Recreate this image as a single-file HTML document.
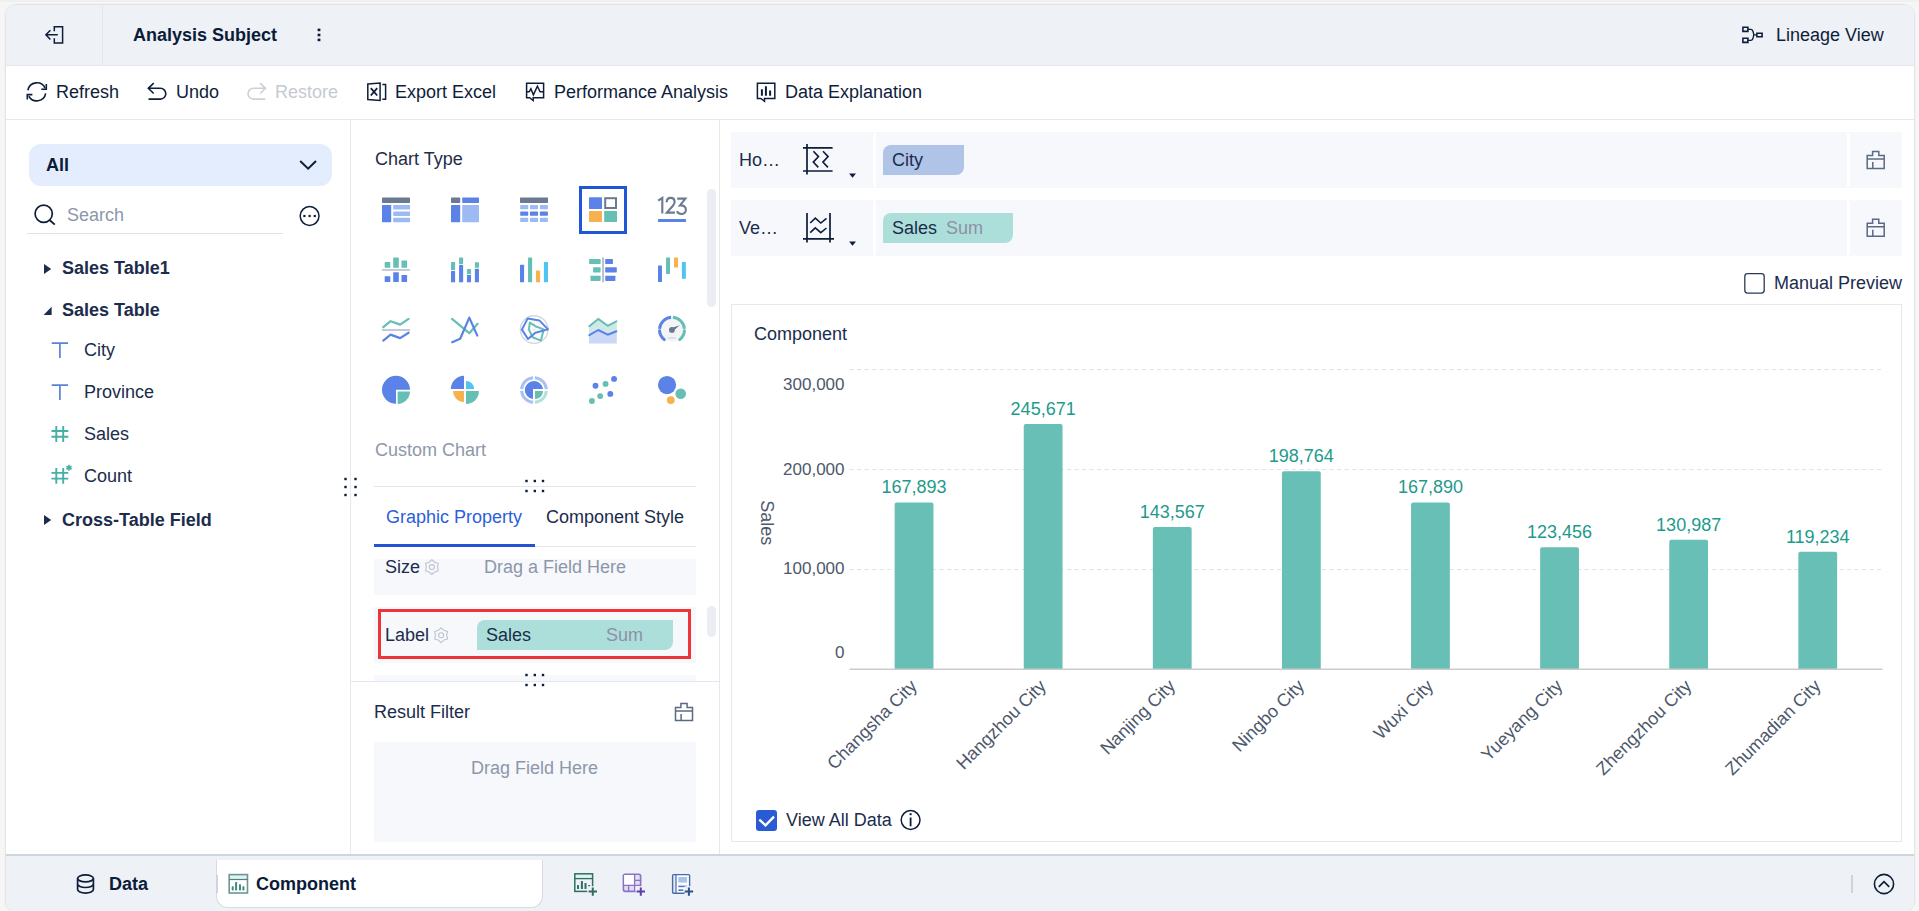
<!DOCTYPE html>
<html><head><meta charset="utf-8"><style>
*{box-sizing:border-box;margin:0;padding:0}
html,body{width:1919px;height:911px;overflow:hidden;background:#f6f6f6;font-family:"Liberation Sans",sans-serif;color:#0e1d3a}
.a{position:absolute}
.t{position:absolute;white-space:nowrap;font-size:18px;line-height:20px}
svg{position:absolute;left:0;top:0;overflow:visible}
</style></head><body>
<div class="a" style="left:0;top:0;width:1919px;height:2px;background:#f0f0f0"></div>
<div class="a" style="left:5px;top:4px;width:1910px;height:909px;border:1px solid #e4e4e4;border-radius:12px;overflow:hidden;background:#fff;box-shadow:0 0 0 1px #f2f2f2"><div class="a" style="left:0px;top:0px;width:1919px;height:61px;background:#eef1f6"></div><div class="a" style="left:0px;top:60px;width:1919px;height:1px;background:#e3e6ee"></div><div class="a" style="left:96px;top:0px;width:1px;height:60px;background:#e2e5ec"></div><div class="a" style="left:0px;top:114px;width:1919px;height:1px;background:#e6e8f0"></div><div class="a" style="left:344px;top:115px;width:1px;height:735px;background:#e6e8f0"></div><div class="a" style="left:713px;top:115px;width:1px;height:735px;background:#e6e8f0"></div><div class="a" style="left:0px;top:849px;width:1919px;height:60px;background:#eef1f6;border-top:2px solid #cfd5de"></div><div class="a" style="left:210px;top:855px;width:327px;height:48px;background:#fff;border-radius:0 0 12px 12px;border:1px solid #d6dbe3;border-top:none"></div><div class="a" style="left:210px;top:870px;width:2px;height:18px;background:#cfd5de"></div></div>
<div class="a" style="left:0;top:0;width:1919px;height:911px"><div class="t" style="left:133px;top:25px;font-weight:700;color:#0b1b38">Analysis Subject</div><div class="t" style="left:1776px;top:25px;color:#0e1d3a">Lineage View</div><div class="t" style="left:56px;top:82px;color:#0e1d3a">Refresh</div><div class="t" style="left:176px;top:82px;color:#0e1d3a">Undo</div><div class="t" style="left:275px;top:82px;color:#c5cad3">Restore</div><div class="t" style="left:395px;top:82px;color:#0e1d3a">Export Excel</div><div class="t" style="left:554px;top:82px;color:#0e1d3a">Performance Analysis</div><div class="t" style="left:785px;top:82px;color:#0e1d3a">Data Explanation</div><div class="a" style="left:29px;top:144px;width:303px;height:42px;background:#e3edfd;border-radius:12px"></div><div class="t" style="left:46px;top:155px;font-weight:700;color:#0b1b38">All</div><div class="t" style="left:67px;top:205px;color:#8c97aa">Search</div><div class="a" style="left:27px;top:233px;width:256px;height:1px;background:#dde1e8"></div><div class="t" style="left:62px;top:258px;font-weight:700;color:#1b2c4c">Sales Table1</div><div class="t" style="left:62px;top:300px;font-weight:700;color:#1b2c4c">Sales Table</div><div class="t" style="left:84px;top:340px;color:#1b2c4c">City</div><div class="t" style="left:84px;top:382px;color:#1b2c4c">Province</div><div class="t" style="left:84px;top:424px;color:#1b2c4c">Sales</div><div class="t" style="left:84px;top:466px;color:#1b2c4c">Count</div><div class="t" style="left:62px;top:510px;font-weight:700;color:#1b2c4c">Cross-Table Field</div><div class="t" style="left:375px;top:149px;color:#1f2d47">Chart Type</div><div class="a" style="left:707px;top:189px;width:9px;height:118px;background:#ebedf2;border-radius:5px"></div><div class="t" style="left:375px;top:440px;color:#8e98aa">Custom Chart</div><div class="a" style="left:374px;top:486px;width:322px;height:1px;background:#e3e6ee"></div><div class="t" style="left:386px;top:507px;color:#2b5fd9">Graphic Property</div><div class="t" style="left:546px;top:507px;color:#1b2c4c">Component Style</div><div class="a" style="left:374px;top:546px;width:322px;height:1px;background:#e6e8ef"></div><div class="a" style="left:374px;top:544px;width:161px;height:3px;background:#2352d6"></div><div class="a" style="left:374px;top:559px;width:322px;height:36px;background:#f7f8fc"></div><div class="t" style="left:385px;top:557px;color:#1b2c4c">Size</div><div class="t" style="left:484px;top:557px;color:#8c97aa">Drag a Field Here</div><div class="a" style="left:374px;top:607px;width:322px;height:56px;background:#f7f8fc"></div><div class="a" style="left:378px;top:609px;width:313px;height:50px;border:3px solid #ef3339"></div><div class="a" style="left:477px;top:620px;width:196px;height:30px;background:#addfda;border-radius:8px 0 8px 0"></div><div class="t" style="left:385px;top:625px;color:#1b2c4c">Label</div><div class="t" style="left:486px;top:625px;color:#1b2c4c">Sales</div><div class="t" style="left:606px;top:625px;color:#8d90a6">Sum</div><div class="a" style="left:707px;top:606px;width:9px;height:31px;background:#ebedf2;border-radius:5px"></div><div class="a" style="left:374px;top:675px;width:322px;height:6px;background:#f7f8fc"></div><div class="a" style="left:351px;top:681px;width:368px;height:1px;background:#e3e6ee"></div><div class="t" style="left:374px;top:702px;color:#1b2c4c">Result Filter</div><div class="a" style="left:374px;top:742px;width:322px;height:100px;background:#f7f8fc"></div><div class="t" style="left:471px;top:758px;color:#8c97aa">Drag Field Here</div><div class="a" style="left:731px;top:132px;width:1171px;height:56px;background:#f7f8fc"></div><div class="a" style="left:873px;top:133px;width:3px;height:54px;background:#fff"></div><div class="a" style="left:1847px;top:133px;width:3px;height:54px;background:#fff"></div><div class="t" style="left:739px;top:150px;color:#1b2c4c">Ho…</div><div class="a" style="left:731px;top:200px;width:1171px;height:56px;background:#f7f8fc"></div><div class="a" style="left:873px;top:201px;width:3px;height:54px;background:#fff"></div><div class="a" style="left:1847px;top:201px;width:3px;height:54px;background:#fff"></div><div class="t" style="left:739px;top:218px;color:#1b2c4c">Ve…</div><div class="a" style="left:883px;top:145px;width:81px;height:30px;background:#b0c4e8;border-radius:8px 0 8px 0"></div><div class="t" style="left:892px;top:150px;color:#1b2c4c">City</div><div class="a" style="left:883px;top:213px;width:130px;height:30px;background:#addfda;border-radius:8px 0 8px 0"></div><div class="t" style="left:892px;top:218px;color:#1b2c4c">Sales</div><div class="t" style="left:946px;top:218px;color:#8d90a6">Sum</div><div class="t" style="left:1774px;top:273px;color:#1b2c4c">Manual Preview</div><div class="a" style="left:731px;top:304px;width:1171px;height:538px;border:1px solid #e6e8f0"></div><div class="t" style="left:754px;top:324px;color:#1b2c4c">Component</div><div class="t" style="left:786px;top:810px;color:#1b2c4c">View All Data</div><div class="t" style="left:109px;top:874px;font-weight:700;color:#0b1b38">Data</div><div class="t" style="left:256px;top:874px;font-weight:700;color:#0b1b38">Component</div><div class="a" style="left:1851px;top:875px;width:2px;height:18px;background:#cdd2dc"></div></div>
<svg width="1919" height="911" viewBox="0 0 1919 911"><path d="M54.3 31.3 V26.7 H62.6 V43.1 H54.3 V38.3" stroke="#0e1d3a" stroke-width="1.5" fill="none" /><path d="M57.8 34.8 H46.3 M50.4 30.2 L45.9 34.8 L50.4 39.4" stroke="#0e1d3a" stroke-width="1.5" fill="none" /><rect x="317.6" y="28.599999999999998" width="2.8" height="2.6" fill="#0e1d3a" rx="0" /><rect x="317.6" y="33.7" width="2.8" height="2.6" fill="#0e1d3a" rx="0" /><rect x="317.6" y="38.6" width="2.8" height="2.6" fill="#0e1d3a" rx="0" /><path d="M1742.9 27.2 h5 v4.2 h-5 Z M1742.9 38.3 h5 v4.1 h-5 Z M1756.9 33.2 h5.2 v3.6 h-5.2 Z" stroke="#0e1d3a" stroke-width="1.6" fill="none" /><path d="M1747.9 29.4 H1750.8 Q1752.5 29.4 1753.2 32 L1753.8 34.8 H1756.9 M1747.9 40.4 H1750.8 Q1752.5 40.4 1753.2 37.6 L1753.8 34.8" stroke="#0e1d3a" stroke-width="1.3" fill="none" /><path d="M27.94 90.24 A9 9 0 0 1 45.08 88.28" stroke="#0e1d3a" stroke-width="1.6" fill="none" /><path d="M46.3 84.1 V89.2 H41.3" stroke="#0e1d3a" stroke-width="1.6" fill="none" /><path d="M45.66 93.36 A9 9 0 0 1 28.85 96.03" stroke="#0e1d3a" stroke-width="1.6" fill="none" /><path d="M27.3 99.5 V94.6 H32.4" stroke="#0e1d3a" stroke-width="1.6" fill="none" /><path d="M153.7 83.1 L148.3 88.3 L153.7 93.5 M148.5 88.3 H160.4 A5.4 5.4 0 0 1 160.4 99.1 H148.5" stroke="#0e1d3a" stroke-width="1.6" fill="none" /><path d="M260.1 83.1 L265.5 88.3 L260.1 93.5 M265.3 88.3 H253.4 A5.4 5.4 0 0 0 253.4 99.1 H265.3" stroke="#ccd0d8" stroke-width="1.6" fill="none" /><path d="M367.8 84 L380.1 83 V100.5 L367.8 99.5 Z" stroke="#0e1d3a" stroke-width="1.5" fill="none" /><path d="M370.8 88.2 L377.2 95.5 M377.2 88.2 L370.8 95.5" stroke="#0e1d3a" stroke-width="1.8" fill="none" /><path d="M382.3 84.6 H385.6 V99.2 H382.3" stroke="#0e1d3a" stroke-width="1.5" fill="none" /><path d="M526.6 83.3 H543.6 V97.7 H533.2 V100.5 L529.6 97.7 H526.6 Z" stroke="#0e1d3a" stroke-width="1.5" fill="none" /><path d="M526.6 91.8 H529.2 L530.9 88.8 L533.4 94.8 L537.4 86.2 L540.1 91.8 H543.6" stroke="#0e1d3a" stroke-width="1.5" fill="none" /><path d="M757.4 83.3 H774.8 V98.4 H764.5 V101.3 L760.8 98.4 H757.4 Z" stroke="#0e1d3a" stroke-width="1.5" fill="none" /><path d="M761.9 89.2 V95.8 M765.9 86.2 V95.8 M770.1 90.4 V95.8" stroke="#0e1d3a" stroke-width="2" fill="none" /><path d="M300.2 161 L308.1 168.6 L316 161" stroke="#0e1d3a" stroke-width="2" fill="none" /><circle cx="43.7" cy="213.8" r="8.6" fill="none" stroke="#0e1d3a" stroke-width="1.7" /><path d="M49.8 220.2 L54.8 224.6" stroke="#0e1d3a" stroke-width="1.8" fill="none" /><circle cx="309.6" cy="216" r="9.4" fill="none" stroke="#0e1d3a" stroke-width="1.5" /><rect x="303.29999999999995" y="214.9" width="2.2" height="2.2" fill="#0e1d3a" rx="0" /><rect x="308.5" y="214.9" width="2.2" height="2.2" fill="#0e1d3a" rx="0" /><rect x="313.7" y="214.9" width="2.2" height="2.2" fill="#0e1d3a" rx="0" /><path d="M44 264 L51.2 269 L44 274 Z" stroke="none" stroke-width="1.5" fill="#1b2c4c" /><path d="M51.6 306.8 V315 H43.6 Z" stroke="none" stroke-width="1.5" fill="#1b2c4c" /><path d="M44 515 L51.2 520 L44 525 Z" stroke="none" stroke-width="1.5" fill="#1b2c4c" /><path d="M51.7 343.2 H68.1 M59.9 343.2 V358.0" stroke="#5a82d9" stroke-width="1.7" fill="none" /><path d="M51.7 385.2 H68.1 M59.9 385.2 V400.0" stroke="#5a82d9" stroke-width="1.7" fill="none" /><path d="M56.3 426.1 V441.90000000000003 M63.2 426.1 V441.90000000000003 M51.5 431.0 H68.3 M51.5 436.70000000000005 H68.3" stroke="#45b0a4" stroke-width="1.9" fill="none" /><path d="M56.3 468 V483.8 M63.2 468 V483.8 M51.5 472.9 H68.3 M51.5 478.6 H68.3" stroke="#45b0a4" stroke-width="1.9" fill="none" /><path d="M69.00 470.80 L69.00 464.80" stroke="#45b0a4" stroke-width="1.6" fill="none" /><path d="M66.40 469.30 L71.60 466.30" stroke="#45b0a4" stroke-width="1.6" fill="none" /><path d="M66.40 466.30 L71.60 469.30" stroke="#45b0a4" stroke-width="1.6" fill="none" /><rect x="344.3" y="477.8" width="2.4" height="2.4" fill="#0e1d3a" rx="0" /><rect x="344.3" y="485.8" width="2.4" height="2.4" fill="#0e1d3a" rx="0" /><rect x="344.3" y="493.8" width="2.4" height="2.4" fill="#0e1d3a" rx="0" /><rect x="354.3" y="477.8" width="2.4" height="2.4" fill="#0e1d3a" rx="0" /><rect x="354.3" y="485.8" width="2.4" height="2.4" fill="#0e1d3a" rx="0" /><rect x="354.3" y="493.8" width="2.4" height="2.4" fill="#0e1d3a" rx="0" /><rect x="525.3" y="479.8" width="2.4" height="2.4" fill="#0e1d3a" rx="0" /><rect x="533.5999999999999" y="479.8" width="2.4" height="2.4" fill="#0e1d3a" rx="0" /><rect x="541.8" y="479.8" width="2.4" height="2.4" fill="#0e1d3a" rx="0" /><rect x="525.3" y="489.8" width="2.4" height="2.4" fill="#0e1d3a" rx="0" /><rect x="533.5999999999999" y="489.8" width="2.4" height="2.4" fill="#0e1d3a" rx="0" /><rect x="541.8" y="489.8" width="2.4" height="2.4" fill="#0e1d3a" rx="0" /><rect x="525.3" y="673.8" width="2.4" height="2.4" fill="#0e1d3a" rx="0" /><rect x="533.5999999999999" y="673.8" width="2.4" height="2.4" fill="#0e1d3a" rx="0" /><rect x="541.8" y="673.8" width="2.4" height="2.4" fill="#0e1d3a" rx="0" /><rect x="525.3" y="683.8" width="2.4" height="2.4" fill="#0e1d3a" rx="0" /><rect x="533.5999999999999" y="683.8" width="2.4" height="2.4" fill="#0e1d3a" rx="0" /><rect x="541.8" y="683.8" width="2.4" height="2.4" fill="#0e1d3a" rx="0" /><rect x="382" y="197.5" width="28" height="5.4" fill="#6b7a90" rx="0.6" /><rect x="382" y="205" width="9.2" height="17.2" fill="#5b82e6" rx="0.6" /><rect x="393.2" y="205" width="16.8" height="4.5" fill="#9dbbf2" rx="0.6" /><rect x="393.2" y="211.4" width="16.8" height="4.5" fill="#9dbbf2" rx="0.6" /><rect x="393.2" y="217.7" width="16.8" height="4.5" fill="#9dbbf2" rx="0.6" /><rect x="451" y="197.5" width="9.2" height="5.4" fill="#6b7a90" rx="0.6" /><rect x="462.2" y="197.5" width="16.8" height="5.4" fill="#5b82e6" rx="0.6" /><rect x="451" y="205" width="9.2" height="17.2" fill="#5b82e6" rx="0.6" /><rect x="462.2" y="205" width="16.8" height="17.2" fill="#9dbbf2" rx="0.6" /><rect x="520" y="197.5" width="28" height="5.4" fill="#6b7a90" rx="0.6" /><rect x="520.2" y="205" width="8" height="4.3" fill="#9dbbf2" rx="0.6" /><rect x="530" y="205" width="8" height="4.3" fill="#9dbbf2" rx="0.6" /><rect x="539.9" y="205" width="8" height="4.3" fill="#9dbbf2" rx="0.6" /><rect x="520.2" y="211.5" width="8" height="4.3" fill="#5b82e6" rx="0.6" /><rect x="530" y="211.5" width="8" height="4.3" fill="#5b82e6" rx="0.6" /><rect x="539.9" y="211.5" width="8" height="4.3" fill="#5b82e6" rx="0.6" /><rect x="520.2" y="217.8" width="8" height="4.3" fill="#9dbbf2" rx="0.6" /><rect x="530" y="217.8" width="8" height="4.3" fill="#9dbbf2" rx="0.6" /><rect x="539.9" y="217.8" width="8" height="4.3" fill="#9dbbf2" rx="0.6" /><rect x="580.5" y="187.5" width="45" height="45" fill="none" stroke="#2156d9" stroke-width="3"/><rect x="589" y="197.2" width="13" height="11.8" fill="#5b82e6" rx="0.5" /><rect x="605.2" y="198.2" width="10.8" height="9.8" fill="none" stroke="#6b7a90" stroke-width="2"/><rect x="589" y="210.9" width="13" height="11.2" fill="#f7b14f" rx="0.5" /><rect x="604.2" y="210.9" width="12.8" height="11.2" fill="#66bfb4" rx="0.5" /><path d="M658.2 200.6 L662.3 197.9 V213.6" stroke="#6b7a90" stroke-width="2.1" fill="none" /><path d="M666.6 202.3 C666.8 199.3 668.5 197.9 670.6 197.9 C673 197.9 674.6 199.6 674.6 201.9 C674.6 203.6 673.8 204.8 672.5 206.3 L666.8 212.6 H674.9" stroke="#6b7a90" stroke-width="2.1" fill="none" /><path d="M677.2 198.6 H685.4 L680 205.4 C683.5 205 685.9 206.8 685.9 209.8 C685.9 212.4 683.8 214 681.4 214 C679.5 214 677.8 213 676.9 211.3" stroke="#6b7a90" stroke-width="2.1" fill="none" /><rect x="658" y="218.9" width="28" height="3.1" fill="#5b82e6" rx="0.6" /><rect x="384.7" y="262.1" width="5.6" height="5.699999999999989" fill="#66bfb4" rx="0.5" /><rect x="393.2" y="257.5" width="5.6" height="10.300000000000011" fill="#66bfb4" rx="0.5" /><rect x="401.5" y="260.5" width="5.6" height="7.300000000000011" fill="#66bfb4" rx="0.5" /><rect x="382" y="269" width="28" height="1.9" fill="#c3c9d5" rx="0" /><rect x="384.7" y="276.3" width="5.6" height="5.699999999999989" fill="#5b82e6" rx="0.5" /><rect x="393.2" y="272.2" width="5.6" height="9.800000000000011" fill="#5b82e6" rx="0.5" /><rect x="401.5" y="274.9" width="5.6" height="7.100000000000023" fill="#5b82e6" rx="0.5" /><rect x="451" y="261.9" width="4.1" height="8.100000000000023" fill="#66bfb4" rx="0.5" /><rect x="451" y="271" width="4.1" height="11.199999999999989" fill="#5b82e6" rx="0.5" /><rect x="459.05" y="257.5" width="4.1" height="6.800000000000011" fill="#66bfb4" rx="0.5" /><rect x="459.05" y="265" width="4.1" height="17.19999999999999" fill="#5b82e6" rx="0.5" /><rect x="466.96" y="269" width="4.1" height="5.300000000000011" fill="#66bfb4" rx="0.5" /><rect x="466.96" y="275.1" width="4.1" height="7.099999999999966" fill="#5b82e6" rx="0.5" /><rect x="474.87" y="262.3" width="4.1" height="5.5" fill="#66bfb4" rx="0.5" /><rect x="474.87" y="268.8" width="4.1" height="13.399999999999977" fill="#5b82e6" rx="0.5" /><rect x="520" y="264.8" width="4.1" height="17.399999999999977" fill="#5b82e6" rx="0.5" /><rect x="528.05" y="257.5" width="4.1" height="24.69999999999999" fill="#66bfb4" rx="0.5" /><rect x="536" y="270.6" width="4.1" height="11.599999999999966" fill="#f7b14f" rx="0.5" /><rect x="543.9" y="262.1" width="4.1" height="20.099999999999966" fill="#4fc3f2" rx="0.5" /><rect x="602.2" y="257.5" width="1.7" height="24.7" fill="#b0b8c6" rx="0" /><rect x="589.15" y="258.9" width="11.450000000000045" height="5.2" fill="#66bfb4" rx="0.6" /><rect x="593.1" y="267.2" width="7.5" height="5.2" fill="#66bfb4" rx="0.6" /><rect x="590.5" y="275.7" width="10.100000000000023" height="5.2" fill="#66bfb4" rx="0.6" /><rect x="605.2" y="258.9" width="7.699999999999932" height="5.2" fill="#5b82e6" rx="0.6" /><rect x="605.2" y="267.2" width="11.599999999999909" height="5.2" fill="#5b82e6" rx="0.6" /><rect x="605.2" y="275.7" width="10.199999999999932" height="5.2" fill="#5b82e6" rx="0.6" /><rect x="658" y="265.6" width="3.95" height="16.399999999999977" fill="#5b82e6" rx="0.5" /><rect x="666.05" y="257.5" width="3.95" height="16.600000000000023" fill="#66bfb4" rx="0.5" /><rect x="674" y="257.5" width="3.95" height="10.100000000000023" fill="#f7b14f" rx="0.5" /><rect x="681.9" y="262.1" width="3.95" height="16.599999999999966" fill="#4fc3f2" rx="0.5" /><path d="M383.3 327.2 L390.6 321.2 L400.1 324.6 L408.6 318.8" stroke="#66bfb4" stroke-width="2.2" fill="none" stroke-linecap="round" stroke-linejoin="round"/><rect x="382" y="329" width="28" height="2" fill="#c3c9d5" rx="0" /><path d="M383.3 340.6 L390.6 334.6 L400.1 338.1 L408.6 332.7" stroke="#5b82e6" stroke-width="2.2" fill="none" stroke-linecap="round" stroke-linejoin="round"/><path d="M452 318.9 L469.3 333.2 L477.6 323.8" stroke="#66bfb4" stroke-width="2.2" fill="none" stroke-linecap="round" stroke-linejoin="round"/><path d="M452.2 342.2 L460.2 338.8 L469.3 317.6 L477.3 335.6" stroke="#5b82e6" stroke-width="2.2" fill="none" stroke-linecap="round" stroke-linejoin="round"/><circle cx="534.2" cy="329.6" r="13.8" fill="none" stroke="#d3d8e0" stroke-width="1.4" /><path d="M521 329.6 H547.5 M534.2 316 V343 M524.8 320.2 L543.6 339 M543.6 320.2 L524.8 339" stroke="#e6e9ee" stroke-width="0.6" fill="none" /><path d="M529.8 322.6 L535.4 326.2 L543.7 329.4 L540.9 340.6 L532.6 337.2 L528.9 329.6 Z" stroke="#66bfb4" stroke-width="2" fill="none" stroke-linejoin="round"/><path d="M527.6 318.6 L539.3 320.4 L548 329.4 L535.4 332.7 L528 339 L521.9 329.6 Z" stroke="#5b82e6" stroke-width="2" fill="none" stroke-linejoin="round"/><path d="M589 326.3 L598.2 319 L607.7 325.8 L616.8 321.3 V331.4 L607.7 334.7 L598.2 330 L589 335 Z" stroke="none" stroke-width="1.5" fill="#cfeae6" /><path d="M589 335.2 L598.2 330 L607.7 334.7 L616.8 331.2 V343.6 H589 Z" stroke="none" stroke-width="1.5" fill="#cbd8f6" /><path d="M589.3 326.2 L598.2 318.9 L607.7 325.8 L616.4 321.3" stroke="#66bfb4" stroke-width="2" fill="none" stroke-linecap="round" stroke-linejoin="round"/><path d="M589.3 335.1 L598.2 330 L607.7 334.7 L616.4 331.2" stroke="#5b82e6" stroke-width="2" fill="none" stroke-linecap="round" stroke-linejoin="round"/><circle cx="672" cy="329.8" r="12" fill="#f2f4f8" stroke="none" stroke-width="1" /><path d="M659.53 328.93 A12.5 12.5 0 0 1 671.13 317.33" stroke="#5b82e6" stroke-width="3" fill="none" /><path d="M672.87 317.33 A12.5 12.5 0 0 1 684.47 328.93" stroke="#66bfb4" stroke-width="3" fill="none" /><path d="M659.53 330.67 A12.5 12.5 0 0 0 664.30 339.65" stroke="#5b82e6" stroke-width="3" fill="none" stroke-linecap="round"/><path d="M684.47 330.67 A12.5 12.5 0 0 1 679.70 339.65" stroke="#66bfb4" stroke-width="3" fill="none" stroke-linecap="round"/><circle cx="671.9" cy="329.9" r="2.9" fill="#6b7a90" stroke="none" stroke-width="1" /><path d="M670.6 328.2 L679.6 325.2 L672.8 331.6 Z" stroke="none" stroke-width="1.5" fill="#6b7a90" /><rect x="667.6" y="337.3" width="8.5" height="1.5" fill="#d5dae2" rx="0.7" /><path d="M396 389.8 H410 A14 14 0 1 0 396 403.8 Z" stroke="none" stroke-width="1.5" fill="#5b82e6" /><path d="M397.6 391.4 H410 A12.6 12.6 0 0 1 397.6 403.9 Z" stroke="none" stroke-width="1.5" fill="#66bfb4" /><path d="M464 389 H450.8 A13.3 13.3 0 0 1 464 375.8 Z" stroke="none" stroke-width="1.5" fill="#5b82e6" /><path d="M466 389 V380.9 A8.1 8.1 0 0 1 474.1 389 Z" stroke="none" stroke-width="1.5" fill="#4fc3f2" /><path d="M464 391 V401.9 A10.9 10.9 0 0 1 453.1 391 Z" stroke="none" stroke-width="1.5" fill="#f7b14f" /><path d="M466 391 H479 A13 13 0 0 1 466 404 Z" stroke="none" stroke-width="1.5" fill="#66bfb4" /><path d="M521.63 389.14 A12.4 12.4 0 0 1 533.14 377.63" stroke="#a9c0f3" stroke-width="3" fill="none" /><path d="M534.86 377.63 A12.4 12.4 0 0 1 546.37 389.14" stroke="#a9c0f3" stroke-width="3" fill="none" /><path d="M533.14 402.37 A12.4 12.4 0 0 1 521.63 390.86" stroke="#a9c0f3" stroke-width="3" fill="none" /><path d="M546.37 390.86 A12.4 12.4 0 0 1 534.86 402.37" stroke="#b2dfd9" stroke-width="3" fill="none" /><path d="M533 389 H543 A9.1 9.1 0 1 0 533 399.1 Z" stroke="none" stroke-width="1.5" fill="#5b82e6" /><path d="M535 391 H543.1 A8.1 8.1 0 0 1 535 399.1 Z" stroke="none" stroke-width="1.5" fill="#66bfb4" /><circle cx="614.05" cy="378.9" r="2.95" fill="#5b82e6" stroke="none" stroke-width="1" /><circle cx="595.5" cy="385.8" r="2.95" fill="#5b82e6" stroke="none" stroke-width="1" /><circle cx="610.3" cy="393.9" r="2.95" fill="#5b82e6" stroke="none" stroke-width="1" /><circle cx="605.55" cy="383.9" r="2.95" fill="#66bfb4" stroke="none" stroke-width="1" /><circle cx="600.2" cy="396.1" r="2.95" fill="#66bfb4" stroke="none" stroke-width="1" /><circle cx="591.9" cy="401.05" r="2.95" fill="#66bfb4" stroke="none" stroke-width="1" /><circle cx="667.05" cy="385.05" r="9.1" fill="#5b82e6" stroke="none" stroke-width="1" /><circle cx="680.7" cy="393.7" r="5.3" fill="#66bfb4" stroke="none" stroke-width="1" /><circle cx="670.8" cy="400.1" r="3.95" fill="#f7b14f" stroke="none" stroke-width="1" /><path d="M431.90 559.70 L434.70 562.25 L438.31 563.40 L437.50 567.10 L438.31 570.80 L434.70 571.95 L431.90 574.50 L429.10 571.95 L425.49 570.80 L426.30 567.10 L425.49 563.40 L429.10 562.25 Z" stroke="#bcc3cf" stroke-width="1.1" fill="none" stroke-linejoin="round"/><circle cx="431.9" cy="567.1" r="2.5" fill="none" stroke="#bcc3cf" stroke-width="1.1" /><path d="M441.10 627.80 L443.90 630.35 L447.51 631.50 L446.70 635.20 L447.51 638.90 L443.90 640.05 L441.10 642.60 L438.30 640.05 L434.69 638.90 L435.50 635.20 L434.69 631.50 L438.30 630.35 Z" stroke="#bcc3cf" stroke-width="1.1" fill="none" stroke-linejoin="round"/><circle cx="441.1" cy="635.2" r="2.5" fill="none" stroke="#bcc3cf" stroke-width="1.1" /><path d="M675.5 720.5 V707.5 H680.9 V703.5 H687.1 V707.5 H692.5 V720.5 Z M675.5 711.1 H692.5 M681.1 714.1 V720.5" stroke="#5a6a85" stroke-width="1.5" fill="none" /><path d="M1867.2 168.4 V155.4 H1872.6000000000001 V151.4 H1878.8 V155.4 H1884.2 V168.4 Z M1867.2 159.0 H1884.2 M1872.8 162.0 V168.4" stroke="#5a6a85" stroke-width="1.5" fill="none" /><path d="M1867.2 236.2 V223.2 H1872.6000000000001 V219.2 H1878.8 V223.2 H1884.2 V236.2 Z M1867.2 226.79999999999998 H1884.2 M1872.8 229.79999999999998 V236.2" stroke="#5a6a85" stroke-width="1.5" fill="none" /><path d="M807 144 V174.5 M803 147.9 H832.6 M803 171 H832.6" stroke="#0e1d3a" stroke-width="1.7" fill="none" /><path d="M813.4 151.2 L818.5 156.6 L813.3 162.1 L818.3 167.4 M823 151.2 L828.1 156.6 L822.9 162.1 L827.9 167.4" stroke="#0e1d3a" stroke-width="1.6" fill="none" /><path d="M849.1 173.4 H856 L852.5 177.8 Z" stroke="none" stroke-width="1.5" fill="#0e1d3a" /><path d="M807 213.1 V242.5 M830 213.1 V242.5 M803 238.9 H834" stroke="#0e1d3a" stroke-width="1.7" fill="none" /><path d="M810.2 223 L815.3 218.2 L820.8 223 L826.5 218.4 M810.2 232.6 L815.3 227.8 L820.8 232.6 L826.5 228" stroke="#0e1d3a" stroke-width="1.6" fill="none" /><path d="M849.1 241.4 H856 L852.5 245.8 Z" stroke="none" stroke-width="1.5" fill="#0e1d3a" /><rect x="1744.8" y="273.7" width="19.4" height="19.4" rx="2.8" fill="#fff" stroke="#2c3a55" stroke-width="1.3"/><line x1="849.5" y1="369.5" x2="1882" y2="369.5" stroke="#e3e3e3" stroke-width="1" stroke-dasharray="4.2 3.3"/><line x1="849.5" y1="469.5" x2="1882" y2="469.5" stroke="#e3e3e3" stroke-width="1" stroke-dasharray="4.2 3.3"/><line x1="849.5" y1="569.5" x2="1882" y2="569.5" stroke="#e3e3e3" stroke-width="1" stroke-dasharray="4.2 3.3"/><path d="M894.65 669 V504.48 Q894.65 502.48 896.65 502.48 H931.45 Q933.45 502.48 933.45 504.48 V669 Z" fill="#68bfb6"/><text x="914.05" y="493.48" font-size="18" fill="#1e9a8c" text-anchor="middle" font-family="Liberation Sans" >167,893</text><text x="918.05" y="687" font-size="18" fill="#4d586b" text-anchor="end" font-family="Liberation Sans" transform="rotate(-45 918.05 687)">Changsha City</text><path d="M1023.75 669 V425.91 Q1023.75 423.91 1025.75 423.91 H1060.55 Q1062.55 423.91 1062.55 425.91 V669 Z" fill="#68bfb6"/><text x="1043.15" y="414.91" font-size="18" fill="#1e9a8c" text-anchor="middle" font-family="Liberation Sans" >245,671</text><text x="1047.15" y="687" font-size="18" fill="#4d586b" text-anchor="end" font-family="Liberation Sans" transform="rotate(-45 1047.15 687)">Hangzhou City</text><path d="M1152.85 669 V529.05 Q1152.85 527.05 1154.85 527.05 H1189.65 Q1191.65 527.05 1191.65 529.05 V669 Z" fill="#68bfb6"/><text x="1172.25" y="518.05" font-size="18" fill="#1e9a8c" text-anchor="middle" font-family="Liberation Sans" >143,567</text><text x="1176.25" y="687" font-size="18" fill="#4d586b" text-anchor="end" font-family="Liberation Sans" transform="rotate(-45 1176.25 687)">Nanjing City</text><path d="M1281.95 669 V473.29 Q1281.95 471.29 1283.95 471.29 H1318.75 Q1320.75 471.29 1320.75 473.29 V669 Z" fill="#68bfb6"/><text x="1301.35" y="462.29" font-size="18" fill="#1e9a8c" text-anchor="middle" font-family="Liberation Sans" >198,764</text><text x="1305.35" y="687" font-size="18" fill="#4d586b" text-anchor="end" font-family="Liberation Sans" transform="rotate(-45 1305.35 687)">Ningbo City</text><path d="M1411.05 669 V504.48 Q1411.05 502.48 1413.05 502.48 H1447.85 Q1449.85 502.48 1449.85 504.48 V669 Z" fill="#68bfb6"/><text x="1430.45" y="493.48" font-size="18" fill="#1e9a8c" text-anchor="middle" font-family="Liberation Sans" >167,890</text><text x="1434.45" y="687" font-size="18" fill="#4d586b" text-anchor="end" font-family="Liberation Sans" transform="rotate(-45 1434.45 687)">Wuxi City</text><path d="M1540.15 669 V549.36 Q1540.15 547.36 1542.15 547.36 H1576.95 Q1578.95 547.36 1578.95 549.36 V669 Z" fill="#68bfb6"/><text x="1559.55" y="538.36" font-size="18" fill="#1e9a8c" text-anchor="middle" font-family="Liberation Sans" >123,456</text><text x="1563.55" y="687" font-size="18" fill="#4d586b" text-anchor="end" font-family="Liberation Sans" transform="rotate(-45 1563.55 687)">Yueyang City</text><path d="M1669.25 669 V541.76 Q1669.25 539.76 1671.25 539.76 H1706.05 Q1708.05 539.76 1708.05 541.76 V669 Z" fill="#68bfb6"/><text x="1688.65" y="530.76" font-size="18" fill="#1e9a8c" text-anchor="middle" font-family="Liberation Sans" >130,987</text><text x="1692.65" y="687" font-size="18" fill="#4d586b" text-anchor="end" font-family="Liberation Sans" transform="rotate(-45 1692.65 687)">Zhengzhou City</text><path d="M1798.35 669 V553.63 Q1798.35 551.63 1800.35 551.63 H1835.15 Q1837.15 551.63 1837.15 553.63 V669 Z" fill="#68bfb6"/><text x="1817.75" y="542.63" font-size="18" fill="#1e9a8c" text-anchor="middle" font-family="Liberation Sans" >119,234</text><text x="1821.75" y="687" font-size="18" fill="#4d586b" text-anchor="end" font-family="Liberation Sans" transform="rotate(-45 1821.75 687)">Zhumadian City</text><line x1="849.5" y1="669.2" x2="1882.5" y2="669.2" stroke="#cccccc" stroke-width="1.6"/><text x="844.5" y="389.7" font-size="17" fill="#4d586b" text-anchor="end" font-family="Liberation Sans" >300,000</text><text x="844.5" y="474.5" font-size="17" fill="#4d586b" text-anchor="end" font-family="Liberation Sans" >200,000</text><text x="844.5" y="574" font-size="17" fill="#4d586b" text-anchor="end" font-family="Liberation Sans" >100,000</text><text x="844.5" y="658" font-size="17" fill="#4d586b" text-anchor="end" font-family="Liberation Sans" >0</text><text x="766.8" y="522.7" font-size="18" fill="#4d586b" text-anchor="middle" font-family="Liberation Sans" transform="rotate(90 766.8 522.7)" dominant-baseline="central">Sales</text><rect x="756" y="810" width="21" height="21" fill="#2a5bd7" rx="3" /><path d="M759.3 819.6 L765.5 825.3 L774 816.6" stroke="#fff" stroke-width="2.3" fill="none" /><circle cx="910.6" cy="820" r="9.4" fill="none" stroke="#0e1d3a" stroke-width="1.5" /><rect x="909.6" y="813.2" width="2" height="2" fill="#0e1d3a" rx="0" /><rect x="909.7" y="817.5" width="1.8" height="8.8" fill="#0e1d3a" rx="0" /><path d="M77.6 878.4 A7.9 3.5 0 0 1 93.4 878.4 A7.9 3.5 0 0 1 77.6 878.4 Z" stroke="#0e1d3a" stroke-width="1.7" fill="none" /><path d="M77.6 878.4 V889.6 A7.9 3.5 0 0 0 93.4 889.6 V878.4 M77.6 884 A7.9 3.5 0 0 0 93.4 884" stroke="#0e1d3a" stroke-width="1.7" fill="none" /><rect x="229.6" y="875.2" width="17.4" height="3.9" fill="#dff3f0" rx="0" /><rect x="229.2" y="874.6" width="18.3" height="18.4" fill="none" stroke="#6a9793" stroke-width="1.6"/><path d="M229.2 879.5 H247.5" stroke="#4f827c" stroke-width="1.2" fill="none" /><rect x="231.7" y="886.3" width="2" height="4.100000000000023" fill="#3e8a80" rx="0.6" /><rect x="235.1" y="882" width="2" height="8.399999999999977" fill="#3e8a80" rx="0.6" /><rect x="239" y="884.3" width="2" height="6.100000000000023" fill="#3e8a80" rx="0.6" /><rect x="242.4" y="886.3" width="2" height="4.100000000000023" fill="#3e8a80" rx="0.6" /><rect x="575.2" y="874.2" width="17" height="4.3" fill="#dff3f0" rx="0" /><rect x="574.8" y="873.8" width="17.8" height="17.6" fill="none" stroke="#2f6e64" stroke-width="1.5"/><path d="M574.8 878.6 H592.6" stroke="#2f6e64" stroke-width="1.3" fill="none" /><rect x="577" y="885.1" width="2" height="3.8999999999999773" fill="#2f6e64" rx="0.5" /><rect x="580.9" y="880.9" width="2" height="8.100000000000023" fill="#2f6e64" rx="0.5" /><rect x="584.5" y="883" width="2" height="6" fill="#2f6e64" rx="0.5" /><rect x="588.1" y="885.1" width="2" height="3.8999999999999773" fill="#2f6e64" rx="0.5" /><rect x="587.2" y="886.2" width="11" height="11" fill="#eef1f6" rx="0" /><path d="M588.6 891.6 H597 M592.8 887.4 V895.8" stroke="#2f6e64" stroke-width="2" fill="none" /><rect x="623.4" y="874.2" width="17.2" height="17.2" rx="1.8" fill="#e4ddf6" stroke="#8a73c6" stroke-width="1.6"/><rect x="624.2" y="875" width="10" height="10" fill="#fff" rx="0" /><path d="M634.6 874.2 V891.4 M623.4 885.4 H640.6 M634.6 880.4 H640.6 M628.6 885.4 V891.4" stroke="#8a73c6" stroke-width="1.3" fill="none" /><rect x="635.6" y="886.2" width="10" height="10" fill="#eef1f6" rx="0" /><path d="M636.6 891.6 H645 M640.8 887.4 V895.8" stroke="#5a40a6" stroke-width="2" fill="none" /><rect x="672.8" y="874.7" width="16.6" height="18.4" fill="#fff" rx="0" /><rect x="672.8" y="874.7" width="3.2" height="18.4" fill="#e2ecfb" rx="0" /><rect x="672.6" y="874.6" width="17" height="18.6" rx="1" fill="none" stroke="#4a6aa6" stroke-width="1.4"/><path d="M676 874.6 V893.2" stroke="#4a6aa6" stroke-width="1.2" fill="none" /><rect x="678.3" y="877" width="8.8" height="5.6" fill="#a9c4ea" rx="0" /><rect x="678.3" y="885.6" width="8.8" height="1.6" fill="#4a78cc" rx="0" /><rect x="678.3" y="889.4" width="5" height="1.6" fill="#4a78cc" rx="0" /><rect x="684.6" y="886.2" width="10" height="10" fill="#eef1f6" rx="0" /><path d="M684.7 891.6 H693.1 M688.9 887.4 V895.8" stroke="#2f4f8f" stroke-width="2" fill="none" /><circle cx="1884" cy="884" r="9.6" fill="none" stroke="#0e1d3a" stroke-width="1.6" /><path d="M1878.8 886.8 L1884 881.6 L1889.2 886.8" stroke="#0e1d3a" stroke-width="1.7" fill="none" /></svg>
</body></html>
